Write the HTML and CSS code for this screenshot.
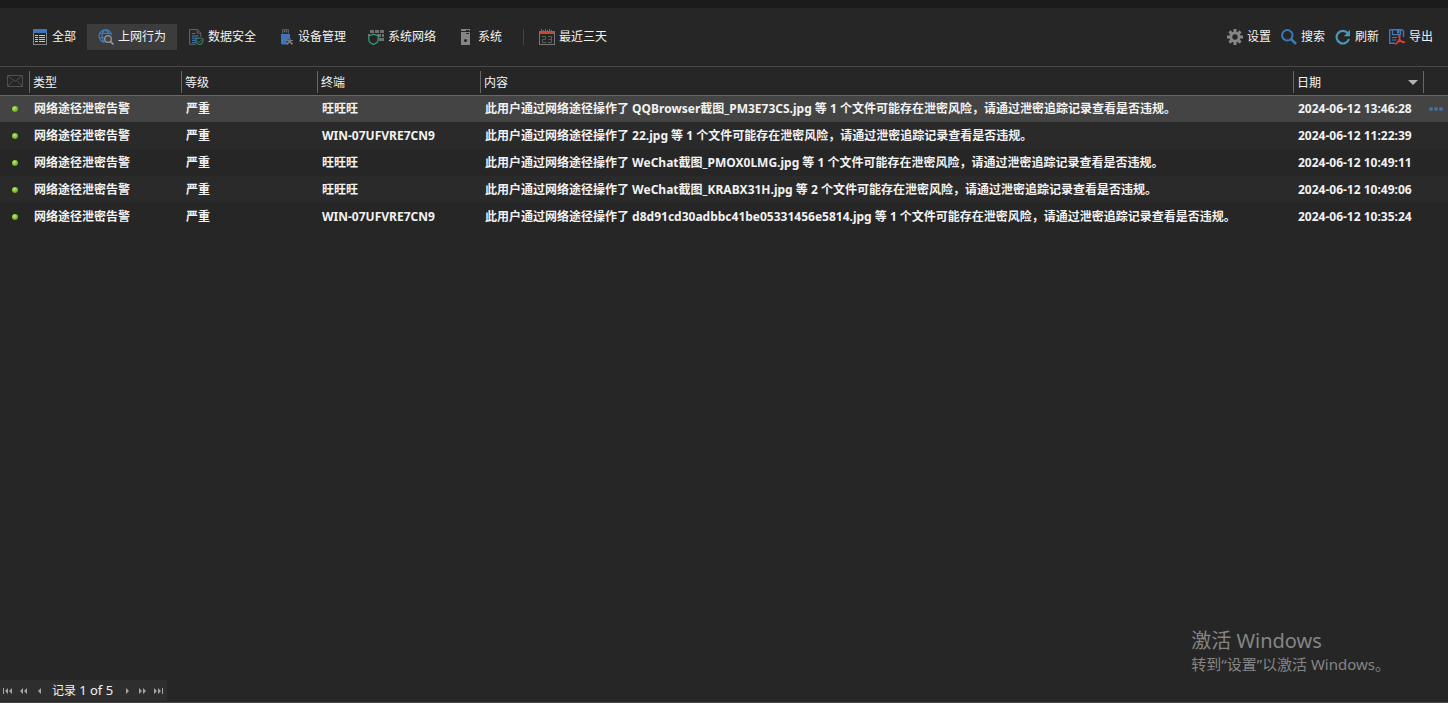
FILE: index.html
```html
<!DOCTYPE html>
<html lang="zh-CN">
<head>
<meta charset="utf-8">
<title>告警记录</title>
<link rel="stylesheet" href="styles.css">
</head>
<body>
<div class="app">
  <header class="toolbar">
    <nav class="filters" aria-label="告警分类">
      <button type="button" class="tool">
        <svg class="icon" viewBox="0 0 16 16" aria-hidden="true"><rect x="1.500" y=".5" width="13" height="15" fill="#252525" stroke="#84888c"/><path d="M1 0h14v4H1z" fill="#3f76b5"/><path d="M3 6h3v1H3zM3 8h3v1H3zM3 10h3v1H3zM3 12h3v1H3zM7 6H13v1H7zM7 8H13v1H7zM7 10H13v1H7zM7 12H13v1H7z" fill="#c4c8cc"/></svg>
        全部
      </button>
      <button type="button" class="tool active" aria-pressed="true">
        <svg class="icon" viewBox="0 0 16 16" aria-hidden="true"><g fill="none" stroke="#3e78b6" stroke-width="1.300"><path d="M6.500 13.300A6.300 6.300 0 1 1 13.600 6M7 .7C3.200 3.600 3.200 10 6.300 13M7.200.7c2.200 1.300 3.100 3 3.200 4.800M1.500 4.300h11.300M.9 8.700h5"/></g><circle cx="10" cy="10" r="3.300" fill="#444" stroke="#969696" stroke-width="1.300"/><path d="M12.400 12.400 15.400 15.400" stroke="#969696" stroke-width="1.800"/></svg>
        上网行为
      </button>
      <button type="button" class="tool">
        <svg class="icon" viewBox="0 0 16 16" aria-hidden="true"><path d="M8 15.300H1.600V.6h7.800l3.400 3.500v4M9.300.8v3.400h3.400" fill="none" stroke="#686868"/><path d="M4 4.500h3.500M4 6.800h6.500M4 9.100h6M4 11.400h4.500M4 13.500h4" stroke="#3972ad" stroke-width="1.200"/><path d="m11.500 9 3.500 1v2c0 1.800-1.500 3-3.500 4C9.500 15 8 13.800 8 12v-2z" fill="#252525" stroke="#39795f" stroke-width="1.300"/><path d="m9.800 12 1.400 1.500 2.500-2.700" fill="none" stroke="#39795f"/></svg>
        数据安全
      </button>
      <button type="button" class="tool">
        <svg class="icon" viewBox="0 0 16 16" aria-hidden="true"><path d="M4.500 4.500v-4h6v4" fill="#353535" stroke="#5a5a5a"/><path d="M6 1.500h1V3H6zM8 1.500h1V3H8z" fill="#777"/><path d="M3 5h9v5l-3 1-1 4.500H4l-1-1z" fill="#3e73bd"/><path d="m10.500 11 4 4.300M12.500 11.500l-4 4" stroke="#777b7e" stroke-width="1.800"/><path d="M8.500 9.500v2h2M12 9v2.500h3" fill="none" stroke="#777b7e"/></svg>
        设备管理
      </button>
      <button type="button" class="tool">
        <svg class="icon" viewBox="0 0 16 16" aria-hidden="true"><path d="M2 1h4v3H2zM7 1h4v3H7zM12 1h4v3h-4zM0 5h2v2H0zM9 5h4v3H9zM14 5h2v3h-2zM11 9h5v3h-5z" fill="#707070"/><path d="m5.500 5.200 4.700 1.700v3.800c0 2-1.800 3.600-4.700 4.700C2.600 14.300.8 12.700.8 10.700V6.900z" fill="#252525" stroke="#3b967c" stroke-width="1.300"/></svg>
        系统网络
      </button>
      <button type="button" class="tool">
        <svg class="icon" viewBox="0 0 16 16" aria-hidden="true"><path d="M3 0h9v2H3zM3 3h9v13H3z" fill="#858585"/><path d="M8 1h3v1H8zM8 4h3v1H8z" fill="#272727"/><circle cx="7.500" cy="11.500" r="1.500" fill="#222"/></svg>
        系统
      </button>
      <span class="separator"></span>
      <button type="button" class="tool">
        <svg class="icon" viewBox="0 0 16 16" aria-hidden="true"><rect x=".5" y="2.500" width="15" height="13" fill="#252525" stroke="#777"/><path d="M1 2h14v3H1z" fill="#c54a34"/><path d="M2.500 0v3M4.500 1v2M6.500 0v3M8.500 1v2M10.500 0v3M12.500 1v2" stroke="#d14b36"/><path d="M3 7.500h3.500v3h-3v3h4M9 7.500h3.500v6H9M9.500 10.500h3" fill="none" stroke="#5c5c5c"/></svg>
        最近三天
      </button>
    </nav>
    <div class="actions">
      <button type="button" class="tool compact">
        <svg class="icon" viewBox="0 0 16 16" aria-hidden="true"><g stroke="#858585" stroke-width="3"><path d="M8 0v16M0 8h16M2.400 2.400l11.200 11.200M13.600 2.400 2.400 13.600"/></g><circle cx="8" cy="8" r="5.600" fill="#858585"/><circle cx="8" cy="8" r="2.700" fill="#262626"/></svg>
        设置
      </button>
      <button type="button" class="tool compact">
        <svg class="icon" viewBox="0 0 16 16" aria-hidden="true"><circle cx="6.300" cy="6.300" r="5.200" fill="none" stroke="#3d76b3" stroke-width="2"/><path d="m10 10 5 5" stroke="#3d76b3" stroke-width="2.600"/></svg>
        搜索
      </button>
      <button type="button" class="tool compact">
        <svg class="icon" viewBox="0 0 16 16" aria-hidden="true"><path d="M12.700 4A6.300 6.300 0 1 0 14 10" fill="none" stroke="#4a98b9" stroke-width="2.200"/><path d="M15 .8v6.400H8.800z" fill="#4a98b9"/></svg>
        刷新
      </button>
      <button type="button" class="tool compact">
        <svg class="icon" viewBox="0 0 16 16" aria-hidden="true"><path d="M.7.700h12.300L14.500 2v6M.7.700V14.300H6" fill="none" stroke="#4278b5" stroke-width="1.400"/><path d="M3.500.7v5h8v-5" fill="none" stroke="#4278b5" stroke-width="1.200"/><path d="M8 1h2.500v3.500H8z" fill="#4278b5"/><path d="M3 8.500h5M3 11h4.500" stroke="#4278b5"/><path d="M9.800 6.500c2.600 0 .1 6.500-3.300 8.800 2-3 6-4 9-2-2.500.8-5-1.800-5.700-6.800z" fill="none" stroke="#df3e3f" stroke-width="1.400"/></svg>
        导出
      </button>
    </div>
  </header>

  <main class="records">
    <table class="grid">
      <colgroup><col class="col-state"><col class="col-type"><col class="col-level"><col class="col-host"><col><col class="col-date"><col class="col-more"></colgroup>
      <thead>
        <tr>
          <th scope="col" aria-label="状态"><svg class="mail" viewBox="0 0 16 12" aria-hidden="true"><path d="M.5.500h15v11H.5zM1 1l7 5.500L15 1M1 11l4.500-5M15 11l-4.500-5" fill="none" stroke="#505050"/></svg></th>
          <th scope="col">类型</th><th scope="col">等级</th><th scope="col">终端</th><th scope="col">内容</th>
          <th scope="col" aria-sort="descending"><span class="sorted">日期<span class="arrow"></span></span></th>
          <th scope="col" aria-label="操作"></th>
        </tr>
      </thead>
      <tbody>
        <tr class="selected"><td><span class="dot"></span></td><td>网络途径泄密告警</td><td>严重</td><td>旺旺旺</td><td>此用户通过网络途径操作了 QQBrowser截图_PM3E73CS.jpg 等 1 个文件可能存在泄密风险，请通过泄密追踪记录查看是否违规。</td><td>2024-06-12 13:46:28</td><td><button type="button" class="more" aria-label="更多"><svg viewBox="0 0 14 4" aria-hidden="true"><circle cx="2" cy="2" r="2"/><circle cx="7" cy="2" r="2"/><circle cx="12" cy="2" r="2"/></svg></button></td></tr>
        <tr><td><span class="dot"></span></td><td>网络途径泄密告警</td><td>严重</td><td>WIN-07UFVRE7CN9</td><td>此用户通过网络途径操作了 22.jpg 等 1 个文件可能存在泄密风险，请通过泄密追踪记录查看是否违规。</td><td>2024-06-12 11:22:39</td><td></td></tr>
        <tr><td><span class="dot"></span></td><td>网络途径泄密告警</td><td>严重</td><td>旺旺旺</td><td>此用户通过网络途径操作了 WeChat截图_PMOX0LMG.jpg 等 1 个文件可能存在泄密风险，请通过泄密追踪记录查看是否违规。</td><td>2024-06-12 10:49:11</td><td></td></tr>
        <tr><td><span class="dot"></span></td><td>网络途径泄密告警</td><td>严重</td><td>旺旺旺</td><td>此用户通过网络途径操作了 WeChat截图_KRABX31H.jpg 等 2 个文件可能存在泄密风险，请通过泄密追踪记录查看是否违规。</td><td>2024-06-12 10:49:06</td><td></td></tr>
        <tr><td><span class="dot"></span></td><td>网络途径泄密告警</td><td>严重</td><td>WIN-07UFVRE7CN9</td><td>此用户通过网络途径操作了 d8d91cd30adbbc41be05331456e5814.jpg 等 1 个文件可能存在泄密风险，请通过泄密追踪记录查看是否违规。</td><td>2024-06-12 10:35:24</td><td></td></tr>
      </tbody>
    </table>
  </main>

  <footer class="footer">
    <div class="pager">
      <button type="button" class="page" aria-label="第一条"><svg viewBox="0 0 10 6" aria-hidden="true"><path d="M0 0h1v6H0zM5 0v6L2 3zM9 0v6L6 3z"/></svg></button>
      <button type="button" class="page" aria-label="上一页"><svg viewBox="0 0 10 6" aria-hidden="true"><path d="M4 0v6L1 3zM8 0v6L5 3z"/></svg></button>
      <button type="button" class="page" aria-label="上一条"><svg viewBox="0 0 10 6" aria-hidden="true"><path d="M6 0v6L3 3z"/></svg></button>
      <span class="position">记录 <span class="count">1 of 5</span></span>
      <button type="button" class="page" aria-label="下一条"><svg viewBox="0 0 10 6" aria-hidden="true"><path d="M4 0v6l3-3z"/></svg></button>
      <button type="button" class="page" aria-label="下一页"><svg viewBox="0 0 10 6" aria-hidden="true"><path d="M1 0v6l3-3zM5 0v6l3-3z"/></svg></button>
      <button type="button" class="page" aria-label="最后一条"><svg viewBox="0 0 10 6" aria-hidden="true"><path d="M0 0v6l3-3zM4 0v6l3-3zM8 0h1v6H8z"/></svg></button>
    </div>
  </footer>

  <aside class="activation">
    <p class="activation-title">激活 Windows</p>
    <p class="activation-text">转到“设置”以激活 Windows。</p>
  </aside>
</div>
</body>
</html>
```
FILE: styles.css
```css
* { box-sizing: border-box; }

body {
  margin: 0;
  background: #262626;
  color: #f2f2f2;
  font-family: "Noto Sans", "Noto Sans CJK SC", sans-serif;
  font-size: 12px;
  line-height: 16px;
}

button {
  border: 0;
  padding: 0;
  background: none;
  color: inherit;
  font: inherit;
}

.app {
  position: relative;
  display: flex;
  flex-direction: column;
  min-height: 100vh;
  border-top: 8px solid #1b1b1b;
}

.toolbar {
  display: flex;
  justify-content: space-between;
  padding: 16px 10px 16px 21px;
  border-bottom: 1px solid #484848;
}

.filters, .actions { display: flex; align-items: center; }

.tool {
  display: flex;
  align-items: center;
  gap: 4px;
  height: 26px;
  padding: 0 11px;
  white-space: nowrap;
}

.tool.compact { padding: 0 5px; }
.tool.active { background: #3c3c3c; }
.icon { width: 16px; height: 16px; flex: none; }

.separator {
  width: 1px;
  height: 16px;
  margin: 0 4px 0 10px;
  background: #444;
}

.records { flex: 1; }

.grid {
  width: 100%;
  table-layout: fixed;
  border-collapse: collapse;
}

.col-state { width: 30px; }
.col-type { width: 152px; }
.col-level { width: 136px; }
.col-host { width: 163px; }
.col-date { width: 130px; }
.col-more { width: 24px; }

.grid th {
  height: 28px;
  padding: 4px 3px 0;
  background: linear-gradient(#686868, #686868) right 4px / 1px 22px no-repeat;
  font-weight: 400;
  text-align: left;
}

.grid th:last-child { background: none; }
.grid thead { border-bottom: 1px solid #686868; }

.grid td {
  height: 27px;
  padding: 0 4px;
  font-weight: 700;
  white-space: nowrap;
}

.grid th:first-child, .grid td:first-child { padding: 0; text-align: center; }
.grid td:last-child { padding: 0; text-align: center; }
.grid tbody tr:nth-child(even) { background: #2a2a2a; }
.grid tbody .selected { background: #444; }

.mail { display: block; width: 16px; height: 12px; margin: 0 auto; }

.sorted { display: flex; align-items: center; justify-content: space-between; padding-right: 3px; }

.arrow {
  border: 5px solid transparent;
  border-top-color: #b4b4b4;
  border-bottom: 0;
}

.dot {
  display: block;
  width: 6px;
  height: 6px;
  margin: 0 auto;
  border-radius: 50%;
  background: radial-gradient(circle at 40% 35%, #c0ec70, #74b82c 55%, #45781a);
}

.more { display: block; margin: 0 auto; }
.more svg { display: block; width: 14px; height: 4px; fill: #466f9b; }

.footer {
  display: flex;
  padding-bottom: 1px;
  border-bottom: 1px solid #484848;
}

.pager {
  display: flex;
  align-items: center;
  height: 21px;
  background: #2e2e2e;
}

.page { width: 16px; height: 20px; display: flex; align-items: center; justify-content: center; }
.page svg { width: 10px; height: 6px; fill: #a4a4a4; }
.position { padding: 0 6px 0 4px; white-space: nowrap; }
.count { font-size: 13px; }

.activation {
  position: absolute;
  right: 58px;
  bottom: 29px;
  color: #858585;
  pointer-events: none;
}

.activation p { margin: 0; }
.activation-title { font-size: 20px; line-height: 26px; }
.activation-text { font-size: 15px; line-height: 20px; }
```
